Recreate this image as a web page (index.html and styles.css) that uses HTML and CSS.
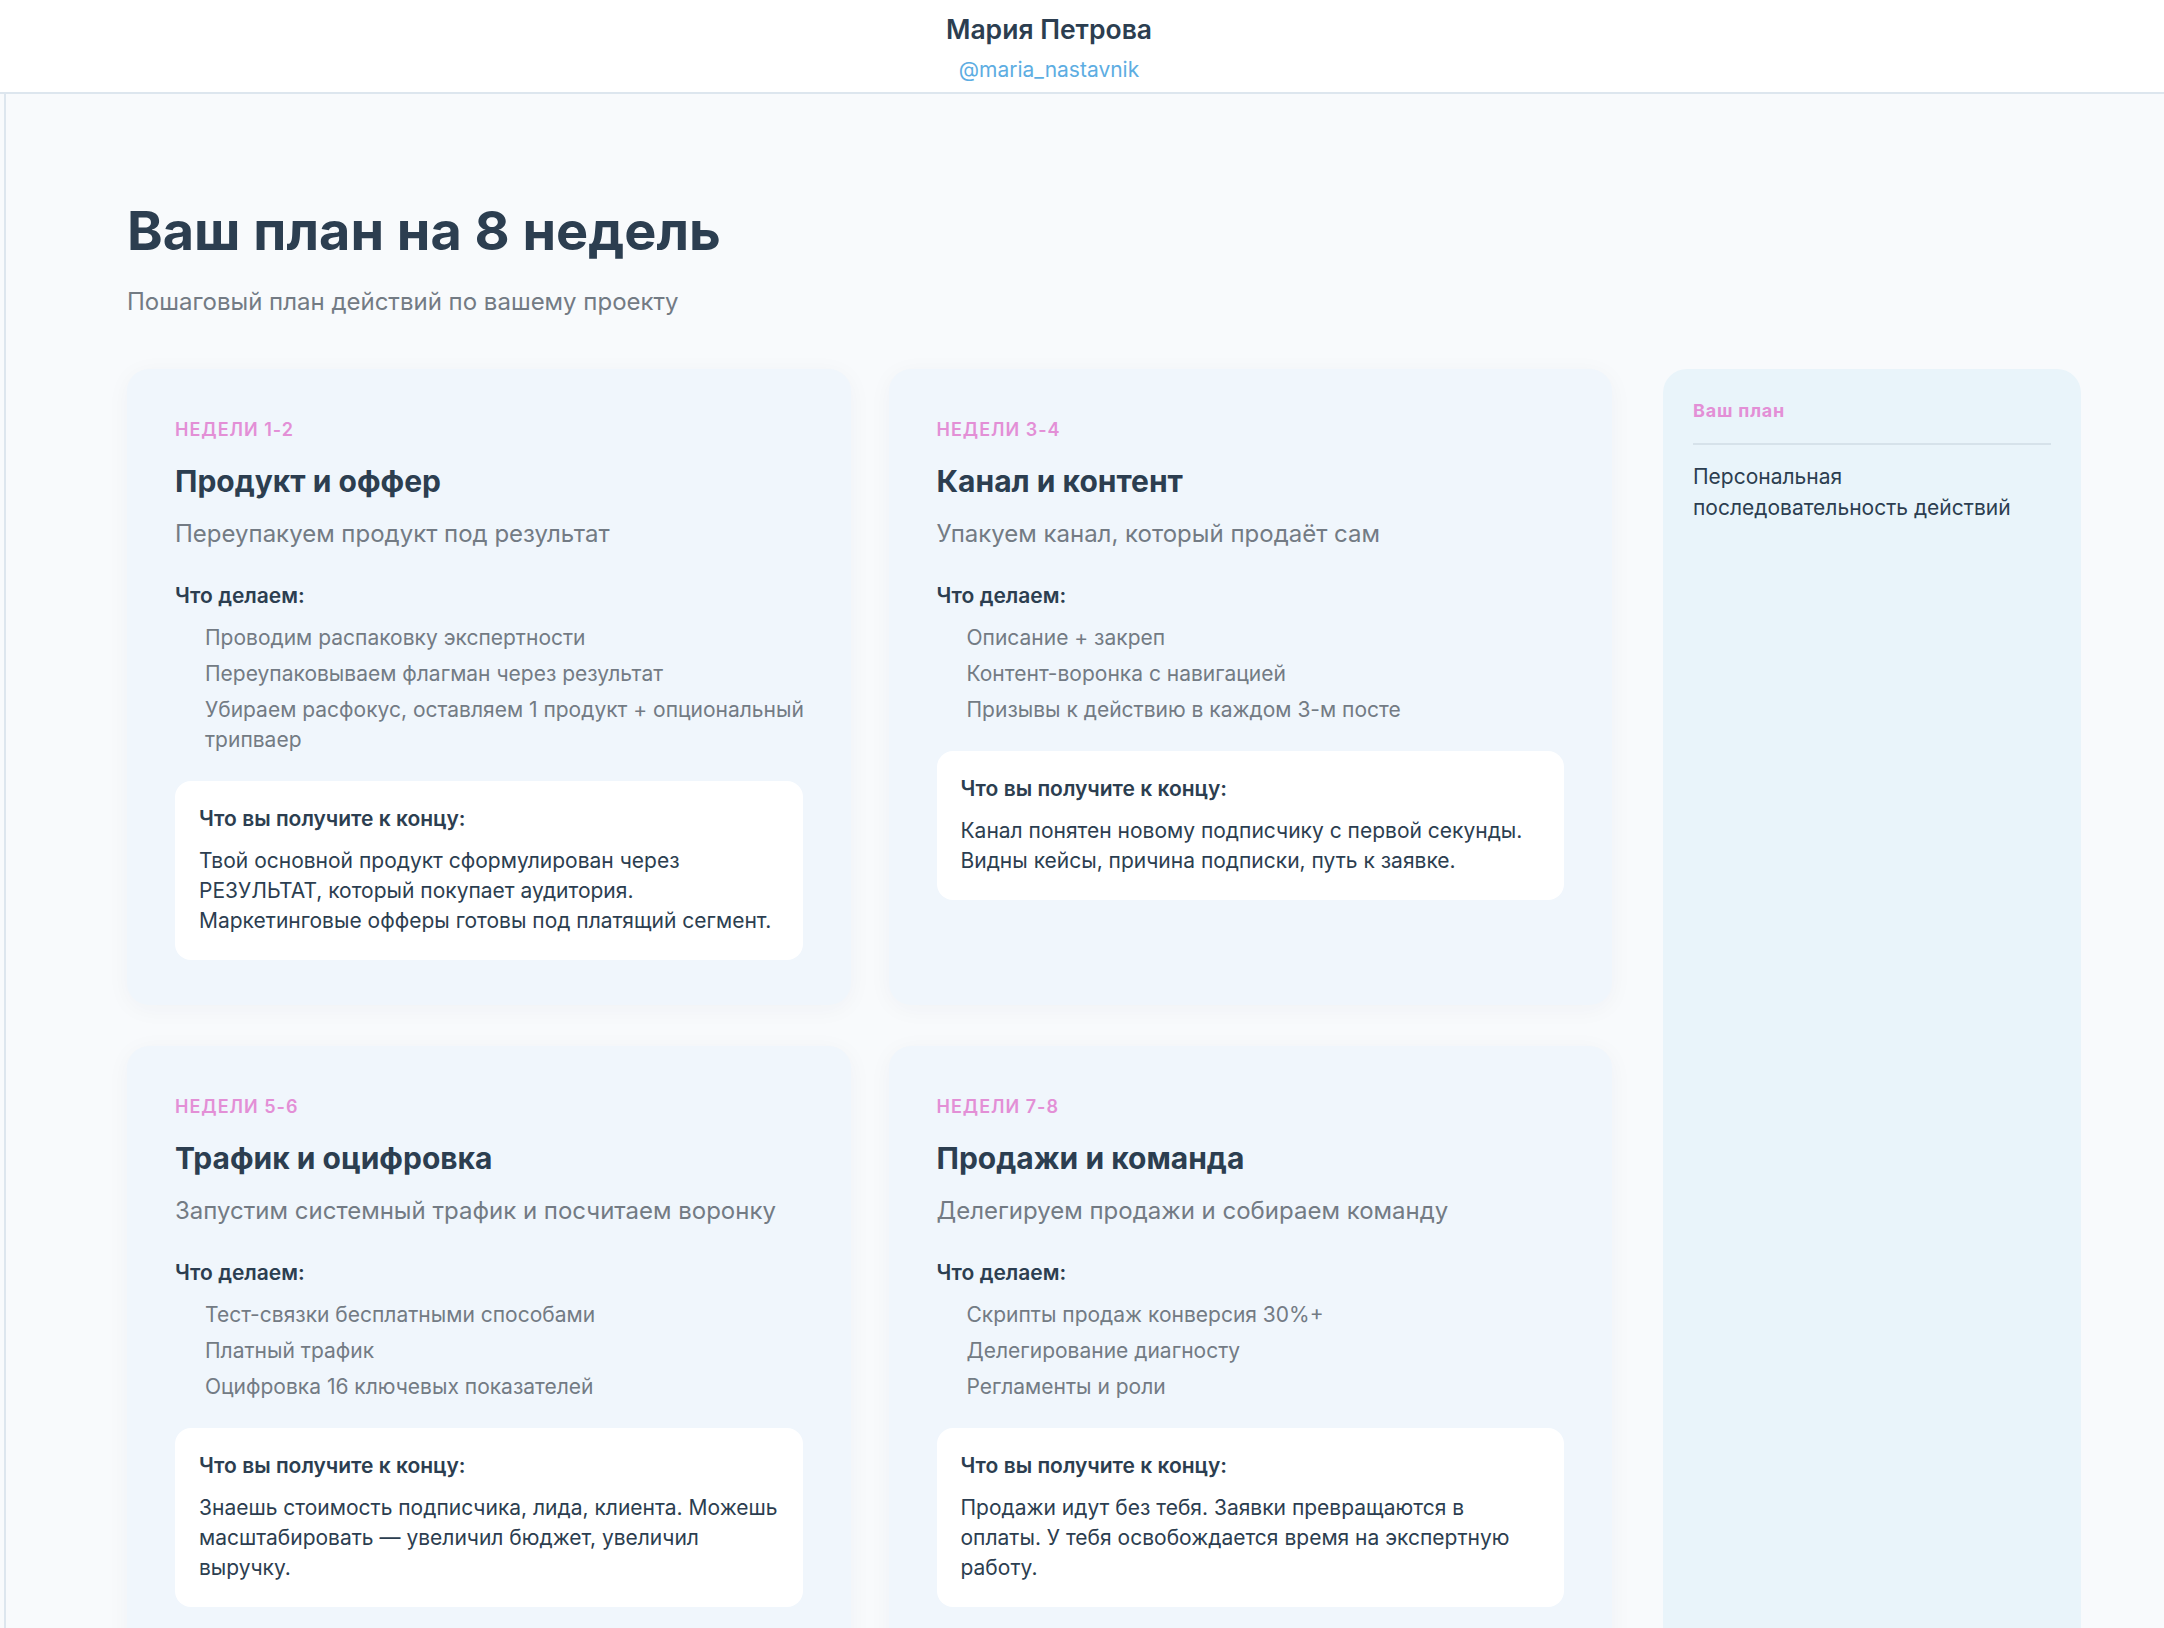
FILE: index.html
```html
<!DOCTYPE html>
<html lang="ru">

<head>
    <meta charset="UTF-8" />
    <meta name="viewport" content="width=device-width, initial-scale=1.0" />
    <title>Ваш план на 8 недель</title>
    <link rel="stylesheet" href="styles.css">
</head>

<body>
    <header class="top">
        <div class="top-name">Мария Петрова</div>
        <div class="top-handle">@maria_nastavnik</div>
    </header>

    <main class="page">
        <h1 class="page-title">Ваш план на 8 недель</h1>
        <p class="page-sub">Пошаговый план действий по вашему проекту</p>

        <div class="layout">
            <div class="weeks">

                <div class="week">
                    <div class="week-label">Недели 1-2</div>
                    <h2 class="week-title">Продукт и оффер</h2>
                    <p class="week-sub">Переупакуем продукт под результат</p>
                    <div class="week-head">Что делаем:</div>
                    <ul class="week-list">
                        <li>Проводим распаковку экспертности</li>
                        <li>Переупаковываем флагман через результат</li>
                        <li>Убираем расфокус, оставляем 1 продукт + опциональный трипваер</li>
                    </ul>
                    <div class="result">
                        <div class="result-head">Что вы получите к концу:</div>
                        <p class="result-text">Твой основной продукт сформулирован через РЕЗУЛЬТАТ, который покупает аудитория. Маркетинговые офферы готовы под платящий сегмент.</p>
                    </div>
                </div>

                <div class="week">
                    <div class="week-label">Недели 3-4</div>
                    <h2 class="week-title">Канал и контент</h2>
                    <p class="week-sub">Упакуем канал, который продаёт сам</p>
                    <div class="week-head">Что делаем:</div>
                    <ul class="week-list">
                        <li>Описание + закреп</li>
                        <li>Контент-воронка с навигацией</li>
                        <li>Призывы к действию в каждом 3-м посте</li>
                    </ul>
                    <div class="result">
                        <div class="result-head">Что вы получите к концу:</div>
                        <p class="result-text">Канал понятен новому подписчику с первой секунды. Видны кейсы, причина подписки, путь к заявке.</p>
                    </div>
                </div>

                <div class="week">
                    <div class="week-label">Недели 5-6</div>
                    <h2 class="week-title">Трафик и оцифровка</h2>
                    <p class="week-sub">Запустим системный трафик и посчитаем воронку</p>
                    <div class="week-head">Что делаем:</div>
                    <ul class="week-list">
                        <li>Тест-связки бесплатными способами</li>
                        <li>Платный трафик</li>
                        <li>Оцифровка 16 ключевых показателей</li>
                    </ul>
                    <div class="result">
                        <div class="result-head">Что вы получите к концу:</div>
                        <p class="result-text">Знаешь стоимость подписчика, лида, клиента. Можешь масштабировать — увеличил бюджет, увеличил выручку.</p>
                    </div>
                </div>

                <div class="week">
                    <div class="week-label">Недели 7-8</div>
                    <h2 class="week-title">Продажи и команда</h2>
                    <p class="week-sub">Делегируем продажи и собираем команду</p>
                    <div class="week-head">Что делаем:</div>
                    <ul class="week-list">
                        <li>Скрипты продаж конверсия 30%+</li>
                        <li>Делегирование диагносту</li>
                        <li>Регламенты и роли</li>
                    </ul>
                    <div class="result">
                        <div class="result-head">Что вы получите к концу:</div>
                        <p class="result-text">Продажи идут без тебя. Заявки превращаются в оплаты. У тебя освобождается время на экспертную работу.</p>
                    </div>
                </div>

            </div>

            <aside class="side">
                <div class="side-label">Ваш план</div>
                <p class="side-text">Персональная последовательность действий</p>
            </aside>
        </div>
    </main>
</body>

</html>
```

FILE: styles.css
```css
body {
    font-family: Inter, "Noto Sans", sans-serif;
    margin: 0;
    padding: 0;
    background-color: #f8fafc;
    color: #2c3e50;
}

/* Header */
.top {
    background: #fff;
    border-bottom: 2px solid #dde6ee;
    height: 94px;
    box-sizing: border-box;
    padding: 12px 66px 0 0;
    text-align: center;
}

.top-name {
    font-size: 26.5px;
    font-weight: 600;
    line-height: 34px;
    color: #2c3e50;
}

.top-handle {
    font-size: 21px;
    line-height: 28px;
    margin-top: 10px;
    color: #5dade2;
}

/* Page */
.page {
    margin-left: 4px;
    border-left: 2px solid #dde6ee;
    padding: 106px 83px 60px 121px;
}

.page-title {
    font-size: 54px;
    font-weight: 700;
    line-height: 62px;
    margin: 0;
    color: #2c3e50;
}

.page-sub {
    font-size: 24px;
    line-height: 31px;
    margin: 24px 0 52px;
    color: #737b84;
}

.layout {
    display: grid;
    grid-template-columns: 1fr 418px;
    gap: 51px;
}

.weeks {
    display: grid;
    grid-template-columns: 1fr 1fr;
    column-gap: 38px;
    row-gap: 41px;
}

/* Week card */
.week {
    background: #f0f6fc;
    border-radius: 22px;
    padding: 49px 48px 45px;
    box-shadow: 0 4px 24px rgba(44, 62, 80, 0.04);
}

.week-label {
    font-size: 18px;
    line-height: 24px;
    font-weight: 600;
    letter-spacing: 1px;
    text-transform: uppercase;
    color: #e38fd6;
}

.week-title {
    font-size: 30px;
    line-height: 38px;
    font-weight: 700;
    margin: 20px 0 0;
    color: #2c3e50;
}

.week-sub {
    font-size: 24px;
    line-height: 31px;
    margin: 18px 0 0;
    color: #737b84;
}

.week-head {
    font-size: 21px;
    line-height: 28px;
    font-weight: 600;
    margin-top: 33px;
}

.week-list {
    list-style: none;
    margin: 13px -8px 0 0;
    padding: 0 0 0 30px;
    display: flex;
    flex-direction: column;
    gap: 6px;
    font-size: 21px;
    line-height: 30px;
    color: #737b84;
}

.result {
    background: #fff;
    border-radius: 16px;
    padding: 24px;
    margin-top: 26px;
}

.result-head {
    font-size: 21px;
    line-height: 28px;
    font-weight: 600;
}

.result-text {
    font-size: 21px;
    line-height: 30px;
    margin: 13px 0 0;
    color: #2c3e50;
}

/* Sidebar */
.side {
    background: #e9f4fa;
    border-radius: 24px;
    padding: 30px;
}

.side-label {
    font-size: 18px;
    line-height: 24px;
    font-weight: 700;
    letter-spacing: 0.8px;
    color: #e38fd6;
    padding-bottom: 20px;
    border-bottom: 2px solid #d6e2ea;
}

.side-text {
    font-size: 21px;
    line-height: 31px;
    margin: 16px 0 0;
    color: #2c3e50;
}
```
